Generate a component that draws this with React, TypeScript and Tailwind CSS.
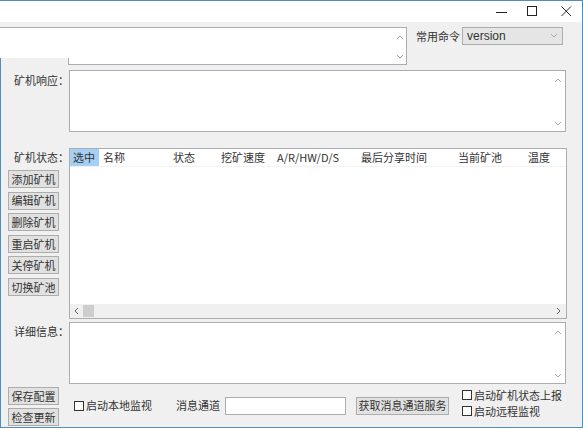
const FONT = { fontFamily: '"Noto Sans CJK SC", "Liberation Sans", sans-serif' };

const COLUMNS = [
  { label: '名称', w: 'w-[70px]' },
  { label: '状态', w: 'w-[48px]' },
  { label: '挖矿速度', w: 'w-[56px]' },
  { label: 'A/R/HW/D/S', w: 'w-[84px]' },
  { label: '最后分享时间', w: 'w-[97px]' },
  { label: '当前矿池', w: 'w-[70px]' },
  { label: '温度', w: 'w-[42px]' },
];

const MINER_BUTTONS = ['添加矿机', '编辑矿机', '删除矿机', '重启矿机', '关停矿机', '切换矿池'];

function Chevron({ dir }: { dir: 'up' | 'down' | 'left' | 'right' }) {
  const d = {
    up: 'M1 5 L4 2 L7 5',
    down: 'M1 2 L4 5 L7 2',
    left: 'M5 1 L2 4 L5 7',
    right: 'M2 1 L5 4 L2 7',
  }[dir];
  const dark = dir === 'left' || dir === 'right';
  return (
    <svg width="8" height="8" viewBox="0 0 8 8" fill="none">
      <path d={d} stroke={dark ? '#606060' : '#a8a8a8'} strokeWidth="1" />
    </svg>
  );
}

function TextArea({ className }: { className?: string }) {
  return (
    <div className={`relative bg-white border border-[#abadb3] ${className ?? ''}`}>
      <div className="absolute right-[3px] top-[6px]">
        <Chevron dir="up" />
      </div>
      <div className="absolute right-[3px] bottom-[3px]">
        <Chevron dir="down" />
      </div>
    </div>
  );
}

function WinButton({ children, className }: { children: React.ReactNode; className?: string }) {
  return (
    <div
      className={`h-[18px] bg-[#e1e1e1] border border-[#adadad] flex items-center justify-center text-[11px] text-[#333] whitespace-nowrap ${className ?? ''}`}
    >
      {children}
    </div>
  );
}

function CheckBox({ label }: { label: string }) {
  return (
    <div className="flex items-center gap-[2px] text-[11px] text-[#333] whitespace-nowrap h-[16px]">
      <div className="w-[10px] h-[10px] border border-[#333] bg-white" />
      <span>{label}</span>
    </div>
  );
}

export default function App() {
  return (
    <div
      style={FONT}
      className="w-[583px] h-[428px] flex flex-col bg-[#f0f0f0] border-t border-r border-b border-[#4f8fba] overflow-hidden"
    >
      {/* title bar */}
      <div className="h-[21px] bg-white flex items-center justify-end shrink-0">
        <svg width="12" height="12" viewBox="0 0 12 12" className="mr-[19px]">
          <path d="M0 6.5 H11" stroke="#222" strokeWidth="1" />
        </svg>
        <svg width="11" height="11" viewBox="0 0 11 11" className="mr-[23px]">
          <rect x="0.5" y="0.5" width="9" height="9" fill="none" stroke="#222" strokeWidth="1" />
        </svg>
        <svg width="11" height="11" viewBox="0 0 11 11" className="mr-[10px]">
          <path d="M0.5 0.5 L10 10 M10 0.5 L0.5 10" stroke="#222" strokeWidth="1" />
        </svg>
      </div>

      {/* command row */}
      <div className="flex pt-[5px] shrink-0">
        <div className="relative w-[407px] h-[38px] bg-white border-t border-r border-b border-[#abadb3]">
          <div className="absolute left-0 bottom-[-1px] w-[69px] h-[7px] bg-[#f0f0f0] border-l border-[#4f8fba] border-r border-r-[#abadb3]" />
          <div className="absolute right-[2px] top-[6px]">
            <Chevron dir="up" />
          </div>
          <div className="absolute right-[2px] bottom-[3px]">
            <Chevron dir="down" />
          </div>
        </div>
        <div className="flex items-center h-[18px] ml-[9px]">
          <span className="text-[11px] text-[#333] w-[46px] whitespace-nowrap">常用命令</span>
          <div className="w-[101px] h-[18px] bg-[#e5e5e5] border border-[#acacac] flex items-center justify-between pl-[4px] pr-[4px]">
            <span className="text-[12px] text-[#333]" style={{ fontFamily: '"Liberation Sans", sans-serif' }}>
              version
            </span>
            <Chevron dir="down" />
          </div>
        </div>
      </div>

      {/* main body */}
      <div className="flex-1 flex flex-col border-l border-[#4f8fba] pr-[16px]">
        {/* response */}
        <div className="flex mt-[5px]">
          <div className="w-[68px] pl-[13px] pt-[2px] text-[11px] text-[#333] whitespace-nowrap">矿机响应：</div>
          <TextArea className="flex-1 h-[62px]" />
        </div>

        {/* miner status */}
        <div className="flex mt-[16px]">
          <div className="w-[68px] flex flex-col">
            <div className="pl-[13px] pt-[1px] h-[22px] text-[11px] text-[#333] whitespace-nowrap">矿机状态：</div>
            <div className="flex flex-col gap-[3.6px] pl-[7px]">
              {MINER_BUTTONS.map((b) => (
                <WinButton key={b} className="w-[51px]">
                  {b}
                </WinButton>
              ))}
            </div>
          </div>
          <div className="flex-1 h-[171px] bg-white border border-[#abadb3] flex flex-col">
            <div className="flex h-[18px] items-center text-[11px] text-[#333] border-b border-[#f2f2f2]">
              <div className="w-[29px] h-[17px] bg-[#a6d0f3] pl-[3px] flex items-center">选中</div>
              {COLUMNS.map((c) => (
                <div key={c.label} className={`${c.w} pl-[4px] whitespace-nowrap`}>
                  {c.label}
                </div>
              ))}
            </div>
            <div className="flex-1" />
            <div className="h-[14px] bg-[#f0f0f0] flex items-center">
              <div className="w-[12px] flex justify-center ml-[1px]">
                <Chevron dir="left" />
              </div>
              <div className="w-[11px] h-[12px] bg-[#cdcdcd]" />
              <div className="flex-1" />
              <div className="w-[12px] flex justify-center mr-[1px]">
                <Chevron dir="right" />
              </div>
            </div>
          </div>
        </div>

        {/* details */}
        <div className="flex mt-[3px]">
          <div className="w-[68px] pl-[13px] pt-[1px] text-[11px] text-[#333] whitespace-nowrap">详细信息：</div>
          <TextArea className="flex-1 h-[62px]" />
        </div>

        {/* bottom controls */}
        <div className="flex mt-[2px]">
          <div className="w-[68px] flex flex-col gap-[3px] pl-[7px] pt-[1px]">
            <WinButton className="w-[51px]">保存配置</WinButton>
            <WinButton className="w-[51px]">检查更新</WinButton>
          </div>
          <div className="flex items-center h-[39px]">
            <div className="ml-[5px] w-[102px]">
              <CheckBox label="启动本地监视" />
            </div>
            <span className="text-[11px] text-[#333] w-[49px] whitespace-nowrap">消息通道</span>
            <div className="w-[121px] h-[18px] bg-white border border-[#abadb3]" />
            <WinButton className="ml-[10px] w-[93px]">获取消息通道服务</WinButton>
          </div>
          <div className="flex flex-col ml-[13px] pt-[1px]">
            <CheckBox label="启动矿机状态上报" />
            <CheckBox label="启动远程监视" />
          </div>
        </div>
      </div>
    </div>
  );
}
